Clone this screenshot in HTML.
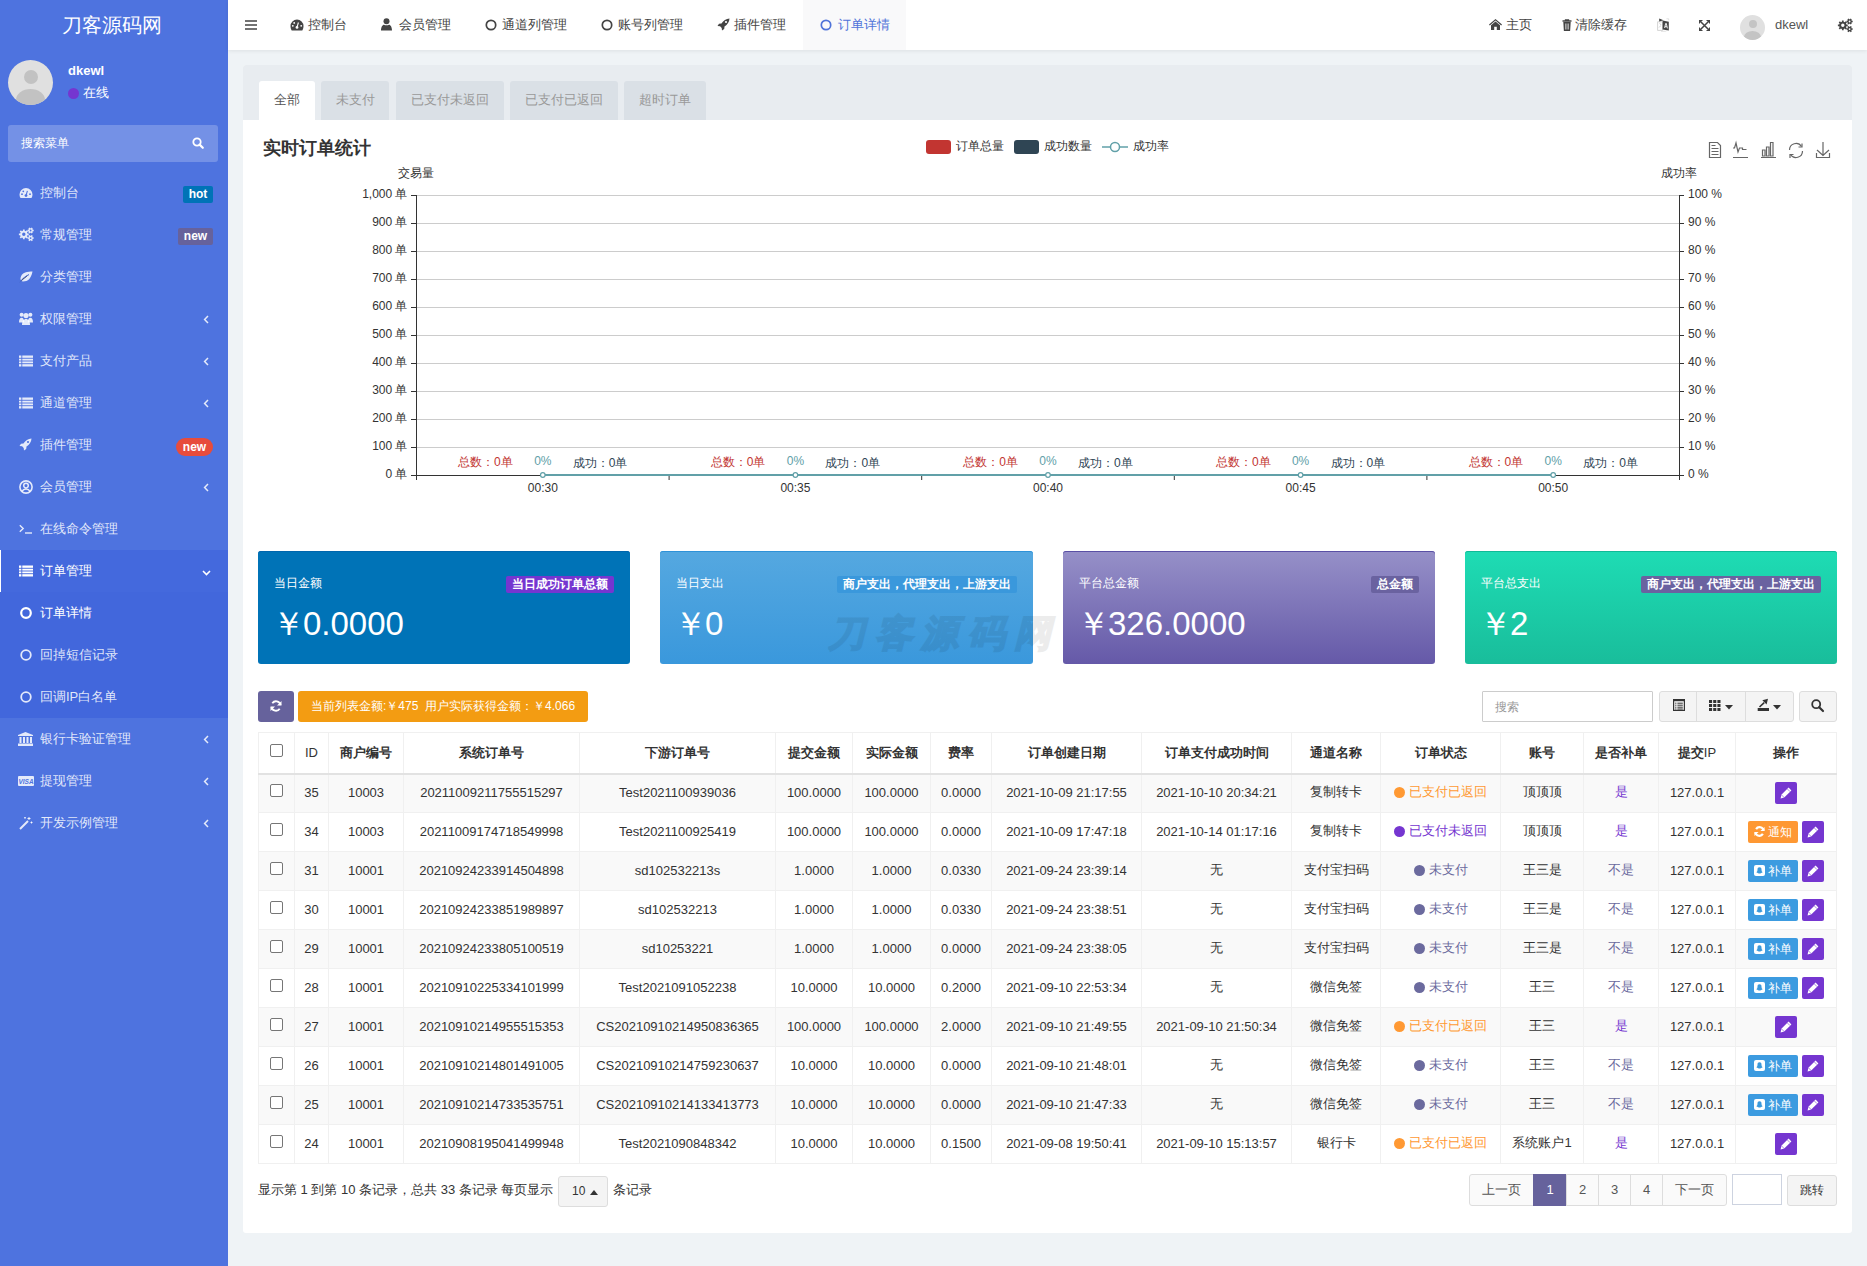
<!DOCTYPE html><html><head><meta charset="utf-8"><style>
*{box-sizing:border-box;margin:0;padding:0}
html,body{width:1867px;height:1266px;overflow:hidden}
body{font-family:"Liberation Sans",sans-serif;font-size:13px;color:#333;background:#eff3f6;position:relative}
.abs{position:absolute}
svg{position:absolute;overflow:visible}
#sidebar{position:absolute;left:0;top:0;width:228px;height:1266px;background:#4e73df;color:#fff}
#header{position:absolute;left:228px;top:0;width:1639px;height:50px;background:#fff;box-shadow:0 1px 4px rgba(0,0,0,.08)}
.nt{position:absolute;top:18px;line-height:14px;color:#444;font-size:13px;white-space:nowrap}
.panel{position:absolute;left:243px;top:65px;width:1609px;height:1168px;background:#fff;border-radius:3px;overflow:hidden}
.tabbar{position:absolute;left:0;top:0;width:100%;height:55px;background:#e8ecf0}
.tab{position:absolute;top:16px;height:39px;line-height:37px;text-align:center;background:#dae0e6;color:#999;border-radius:3px 3px 0 0;font-size:13px}
.tab.on{background:#fff;color:#555}
.mi{position:absolute;left:0;width:228px;height:42px;color:rgba(255,255,255,.85);font-size:13px;white-space:nowrap}
.mi .t{position:absolute;left:40px;top:14px;line-height:14px}
.badge{position:absolute;height:17px;line-height:17px;font-size:12px;font-weight:bold;color:#fff;padding:0 5px;border-radius:3px}
.card{position:absolute;top:551px;height:113px;width:372px;border-radius:3px;color:#fff}
.card .lb{position:absolute;left:16px;top:25px;font-size:12px;line-height:14px}
.card .bd{position:absolute;top:25px;height:17px;line-height:17px;font-size:12px;font-weight:bold;padding:0 6px;border-radius:2px}
.card .num{position:absolute;left:14px;top:53px;font-size:33px;line-height:40px;white-space:nowrap}
table.tb{position:absolute;left:258px;top:732px;width:1578px;border-collapse:collapse;table-layout:fixed;font-size:13px;color:#333}
.tb td,.tb th{border:1px solid #f0f0f0;text-align:center;vertical-align:middle;white-space:nowrap;overflow:hidden;padding:0}
.tb th{height:41px;font-weight:bold;border-bottom:2px solid #e2e2e2}
.tb td{height:39px;padding-bottom:2px}
.tb tr.odd td{background:#f9f9f9}
.cb{display:inline-block;width:13px;height:13px;border:1px solid #767676;border-radius:2px;background:#fff;vertical-align:middle;position:relative;top:-3px}
.dot{display:inline-block;width:11px;height:11px;border-radius:50%;vertical-align:middle;margin-right:4px;position:relative;top:0}
.st1{color:#ff9933}.st1 .dot{background:#ff9933}
.st2{color:#7536d0}.st2 .dot{background:#7536d0}
.st3{color:#6b6a9e}.st3 .dot{background:#6b6a9e}
.yes{color:#7536d0}.no{color:#6b6a9e}
.eb{display:inline-block;width:22px;height:22px;background:#7536d0;border-radius:2px;vertical-align:middle;position:relative;top:1px}
.bb{display:inline-block;height:20px;line-height:20px;padding:0 5px;background:#3c9be0;color:#fff;border-radius:2px;vertical-align:middle;font-size:12px;margin-right:4px;position:relative;top:1px}
.ob{display:inline-block;height:20px;line-height:20px;padding:0 5px;background:#fe9833;color:#fff;border-radius:2px;vertical-align:middle;font-size:12px;margin-right:4px;position:relative;top:1px}
.pg{position:absolute;top:1174px;height:32px;line-height:30px;text-align:center;border:1px solid #ddd;background:#fafafa;color:#555;font-size:13px}
.ax{font-size:12px;fill:#333}
</style></head><body>
<div id="sidebar">
<div class="abs" style="left:-2px;top:14px;width:228px;line-height:22px;text-align:center;font-size:20px;color:#fff">刀客源码网</div>
<div class="abs" style="left:8px;top:60px;width:45px;height:45px;border-radius:50%;background:#e0e0e0;overflow:hidden">
<div class="abs" style="left:16px;top:10px;width:14px;height:14px;border-radius:50%;background:#c2c2c2"></div>
<div class="abs" style="left:8px;top:29px;width:29px;height:22px;border-radius:50%;background:#c2c2c2"></div></div>
<div class="abs" style="left:68px;top:64px;font-size:13px;font-weight:bold;line-height:14px">dkewl</div>
<div class="abs" style="left:68px;top:88px;width:11px;height:11px;border-radius:50%;background:#7536d0"></div>
<div class="abs" style="left:83px;top:86px;font-size:13px;line-height:14px">在线</div>
<div class="abs" style="left:8px;top:125px;width:210px;height:37px;border-radius:3px;background:rgba(255,255,255,.22)">
<div class="abs" style="left:13px;top:11px;font-size:12px;line-height:14px;color:#fff">搜索菜单</div>
<svg style="left:184px;top:11.5px" width="12" height="12" viewBox="0 0 12 12"><circle cx="5" cy="5" r="3.7" fill="none" stroke="#fff" stroke-width="1.8"/><path d="M7.6 7.6L10.8 10.8" stroke="#fff" stroke-width="2.2" stroke-linecap="round"/></svg></div>
<div class="abs" style="left:0;top:550px;width:228px;height:168px;background:#4267dc"></div><div class="abs" style="left:0;top:550px;width:228px;height:42px;background:#4469dd"></div>
<div class="abs" style="left:0;top:550px;width:1px;height:42px;background:#fff"></div>
<svg style="left:19px;top:187px" width="14" height="12" viewBox="0 0 14 12"><path d="M7 1A6.5 6.5 0 0 0 .5 7.5c0 1.3.4 2.6 1 3.5h11c.7-1 1-2.2 1-3.5A6.5 6.5 0 0 0 7 1z" fill="rgba(255,255,255,.85)"/><circle cx="7" cy="8.6" r="1.4" fill="#4e73df"/><path d="M7 8.6L8.4 3.8" stroke="#4e73df" stroke-width="1.1"/><circle cx="3" cy="7.2" r=".9" fill="#4e73df"/><circle cx="4.3" cy="4.3" r=".9" fill="#4e73df"/><circle cx="11" cy="7.2" r=".9" fill="#4e73df"/></svg>
<div class="abs" style="left:40px;top:186px;line-height:14px;font-size:13px;color:rgba(255,255,255,.85);white-space:nowrap">控制台</div>
<div class="badge" style="left:183px;top:186px;width:30px;height:17px;line-height:17px;text-align:center;padding:0;background:#0073b7;border-radius:2px">hot</div>
<svg style="left:18px;top:227px" width="16" height="15" viewBox="0 0 16 15"><path d="M4.38 3.88L4.92 3.71L4.92 2.38L6.68 2.38L6.68 3.71L7.22 3.88L7.72 4.14L8.66 3.20L9.90 4.44L8.96 5.38L9.22 5.88L9.39 6.42L10.72 6.42L10.72 8.18L9.39 8.18L9.22 8.72L8.96 9.22L9.90 10.16L8.66 11.40L7.72 10.46L7.22 10.72L6.68 10.89L6.68 12.22L4.92 12.22L4.92 10.89L4.38 10.72L3.88 10.46L2.94 11.40L1.70 10.16L2.64 9.22L2.38 8.72L2.21 8.18L0.88 8.18L0.88 6.42L2.21 6.42L2.38 5.88L2.64 5.38L1.70 4.44L2.94 3.20L3.88 4.14ZM7.50 7.30A1.7 1.7 0 1 0 4.10 7.30A1.7 1.7 0 1 0 7.50 7.30ZM14.59 2.35L14.78 2.78L15.71 2.75L15.71 4.25L14.78 4.22L14.59 4.65L14.32 5.03L14.80 5.82L13.51 6.57L13.07 5.75L12.60 5.80L12.13 5.75L11.69 6.57L10.40 5.82L10.88 5.03L10.61 4.65L10.42 4.22L9.49 4.25L9.49 2.75L10.42 2.78L10.61 2.35L10.88 1.97L10.40 1.18L11.69 0.43L12.13 1.25L12.60 1.20L13.07 1.25L13.51 0.43L14.80 1.18L14.32 1.97ZM13.50 3.50A0.9 0.9 0 1 0 11.70 3.50A0.9 0.9 0 1 0 13.50 3.50ZM14.59 9.95L14.78 10.38L15.71 10.35L15.71 11.85L14.78 11.82L14.59 12.25L14.32 12.63L14.80 13.42L13.51 14.17L13.07 13.35L12.60 13.40L12.13 13.35L11.69 14.17L10.40 13.42L10.88 12.63L10.61 12.25L10.42 11.82L9.49 11.85L9.49 10.35L10.42 10.38L10.61 9.95L10.88 9.57L10.40 8.78L11.69 8.03L12.13 8.85L12.60 8.80L13.07 8.85L13.51 8.03L14.80 8.78L14.32 9.57ZM13.50 11.10A0.9 0.9 0 1 0 11.70 11.10A0.9 0.9 0 1 0 13.50 11.10Z" fill="rgba(255,255,255,.85)" fill-rule="evenodd"/></svg>
<div class="abs" style="left:40px;top:228px;line-height:14px;font-size:13px;color:rgba(255,255,255,.85);white-space:nowrap">常规管理</div>
<div class="badge" style="left:178px;top:228px;width:35px;height:17px;line-height:17px;text-align:center;padding:0;background:#66629c;border-radius:2px">new</div>
<svg style="left:19px;top:271px" width="14" height="12" viewBox="0 0 14 12"><path d="M13.5 .5C9 .5 2.5 1 1.5 7c-.3 1.8.8 3.5 2.5 3.5 5 0 8-3 9.5-10z" fill="rgba(255,255,255,.85)"/><path d="M.5 11.5C3 8 6 5.5 10 3.5" stroke="#4e73df" stroke-width="1"/></svg>
<div class="abs" style="left:40px;top:270px;line-height:14px;font-size:13px;color:rgba(255,255,255,.85);white-space:nowrap">分类管理</div>
<svg style="left:19px;top:312px" width="14" height="13" viewBox="0 0 14 13"><circle cx="7" cy="3.6" r="2.6" fill="rgba(255,255,255,.85)"/><circle cx="2.6" cy="2.8" r="2" fill="rgba(255,255,255,.85)"/><circle cx="11.4" cy="2.8" r="2" fill="rgba(255,255,255,.85)"/><path d="M3 13c0-3.6 1.6-6 4-6s4 2.4 4 6z" fill="rgba(255,255,255,.85)"/><path d="M0 10.5c0-3 1-4.8 2.6-4.8S5.2 7.5 5.2 10.5zM8.8 10.5c0-3 1-4.8 2.6-4.8S14 7.5 14 10.5z" fill="rgba(255,255,255,.85)"/></svg>
<div class="abs" style="left:40px;top:312px;line-height:14px;font-size:13px;color:rgba(255,255,255,.85);white-space:nowrap">权限管理</div>
<svg style="left:203px;top:315px" width="6" height="9" viewBox="0 0 6 9"><path d="M5 1L1.6 4.5L5 8" fill="none" stroke="rgba(255,255,255,.85)" stroke-width="1.5"/></svg>
<svg style="left:19px;top:355px" width="14" height="12" viewBox="0 0 14 12"><rect x="0" y=".5" width="14" height="11" fill="rgba(255,255,255,.85)"/><path d="M0 3.3H14M0 6H14M0 8.7H14M2.8 0V12" stroke="#4e73df" stroke-width=".9"/></svg>
<div class="abs" style="left:40px;top:354px;line-height:14px;font-size:13px;color:rgba(255,255,255,.85);white-space:nowrap">支付产品</div>
<svg style="left:203px;top:357px" width="6" height="9" viewBox="0 0 6 9"><path d="M5 1L1.6 4.5L5 8" fill="none" stroke="rgba(255,255,255,.85)" stroke-width="1.5"/></svg>
<svg style="left:19px;top:397px" width="14" height="12" viewBox="0 0 14 12"><rect x="0" y=".5" width="14" height="11" fill="rgba(255,255,255,.85)"/><path d="M0 3.3H14M0 6H14M0 8.7H14M2.8 0V12" stroke="#4e73df" stroke-width=".9"/></svg>
<div class="abs" style="left:40px;top:396px;line-height:14px;font-size:13px;color:rgba(255,255,255,.85);white-space:nowrap">通道管理</div>
<svg style="left:203px;top:399px" width="6" height="9" viewBox="0 0 6 9"><path d="M5 1L1.6 4.5L5 8" fill="none" stroke="rgba(255,255,255,.85)" stroke-width="1.5"/></svg>
<svg style="left:19px;top:438px" width="13" height="13" viewBox="0 0 13 13"><path d="M12.5.5C9 .7 6.5 2.5 4.5 5.5L2 5.8.5 8l2.6.3L4.7 10l.3 2.6L7.2 11l.3-2.5c3-2 4.8-4.5 5-8z" fill="rgba(255,255,255,.85)"/><circle cx="9" cy="4" r="1.1" fill="#4e73df"/></svg>
<div class="abs" style="left:40px;top:438px;line-height:14px;font-size:13px;color:rgba(255,255,255,.85);white-space:nowrap">插件管理</div>
<div class="badge" style="left:176px;top:438px;width:37px;height:18px;line-height:18px;text-align:center;padding:0;background:#e74c3c;border-radius:9px">new</div>
<svg style="left:19px;top:480px" width="14" height="14" viewBox="0 0 14 14"><circle cx="7" cy="7" r="6.1" fill="none" stroke="rgba(255,255,255,.85)" stroke-width="1.6"/><circle cx="7" cy="5.6" r="2.3" fill="none" stroke="rgba(255,255,255,.85)" stroke-width="1.5"/><path d="M3 11.3c.8-1.5 2.2-2.4 4-2.4s3.2.9 4 2.4" fill="none" stroke="rgba(255,255,255,.85)" stroke-width="1.5"/></svg>
<div class="abs" style="left:40px;top:480px;line-height:14px;font-size:13px;color:rgba(255,255,255,.85);white-space:nowrap">会员管理</div>
<svg style="left:203px;top:483px" width="6" height="9" viewBox="0 0 6 9"><path d="M5 1L1.6 4.5L5 8" fill="none" stroke="rgba(255,255,255,.85)" stroke-width="1.5"/></svg>
<svg style="left:19px;top:524px" width="14" height="10" viewBox="0 0 14 10"><path d="M.8 1.2L4.2 4.5L.8 7.8" fill="none" stroke="rgba(255,255,255,.85)" stroke-width="1.4"/><path d="M6 9H13" stroke="rgba(255,255,255,.85)" stroke-width="1.4"/></svg>
<div class="abs" style="left:40px;top:522px;line-height:14px;font-size:13px;color:rgba(255,255,255,.85);white-space:nowrap">在线命令管理</div>
<svg style="left:19px;top:565px" width="14" height="12" viewBox="0 0 14 12"><rect x="0" y=".5" width="14" height="11" fill="#fff"/><path d="M0 3.3H14M0 6H14M0 8.7H14M2.8 0V12" stroke="#4267dc" stroke-width=".9"/></svg>
<div class="abs" style="left:40px;top:564px;line-height:14px;font-size:13px;color:#fff;white-space:nowrap">订单管理</div>
<svg style="left:202px;top:570px" width="9" height="6" viewBox="0 0 9 6"><path d="M1 1L4.5 4.5L8 1" fill="none" stroke="#fff" stroke-width="1.6"/></svg>
<svg style="left:20px;top:607px" width="12" height="12" viewBox="0 0 12 12"><circle cx="6" cy="6" r="4.8" fill="none" stroke="#fff" stroke-width="2.2"/></svg>
<div class="abs" style="left:40px;top:606px;line-height:14px;font-size:13px;color:#fff;white-space:nowrap">订单详情</div>
<svg style="left:20px;top:649px" width="12" height="12" viewBox="0 0 12 12"><circle cx="6" cy="6" r="4.8" fill="none" stroke="rgba(255,255,255,.85)" stroke-width="1.8"/></svg>
<div class="abs" style="left:40px;top:648px;line-height:14px;font-size:13px;color:rgba(255,255,255,.85);white-space:nowrap">回掉短信记录</div>
<svg style="left:20px;top:691px" width="12" height="12" viewBox="0 0 12 12"><circle cx="6" cy="6" r="4.8" fill="none" stroke="rgba(255,255,255,.85)" stroke-width="1.8"/></svg>
<div class="abs" style="left:40px;top:690px;line-height:14px;font-size:13px;color:rgba(255,255,255,.85);white-space:nowrap">回调IP白名单</div>
<svg style="left:18px;top:732px" width="15" height="14" viewBox="0 0 15 14"><path d="M7.5 0L15 3V4H0V3z" fill="rgba(255,255,255,.85)"/><rect x="1.5" y="5" width="2" height="6" fill="rgba(255,255,255,.85)"/><rect x="5" y="5" width="2" height="6" fill="rgba(255,255,255,.85)"/><rect x="8.5" y="5" width="2" height="6" fill="rgba(255,255,255,.85)"/><rect x="12" y="5" width="2" height="6" fill="rgba(255,255,255,.85)"/><rect x="0" y="11.5" width="15" height="2.5" fill="rgba(255,255,255,.85)"/></svg>
<div class="abs" style="left:40px;top:732px;line-height:14px;font-size:13px;color:rgba(255,255,255,.85);white-space:nowrap">银行卡验证管理</div>
<svg style="left:203px;top:735px" width="6" height="9" viewBox="0 0 6 9"><path d="M5 1L1.6 4.5L5 8" fill="none" stroke="rgba(255,255,255,.85)" stroke-width="1.5"/></svg>
<svg style="left:18px;top:776px" width="16" height="10" viewBox="0 0 16 10"><rect width="16" height="10" rx="1" fill="rgba(255,255,255,.85)"/><text x="8" y="7.8" font-size="6.5" font-weight="bold" font-style="italic" text-anchor="middle" fill="#4e73df" font-family="Liberation Sans">VISA</text></svg>
<div class="abs" style="left:40px;top:774px;line-height:14px;font-size:13px;color:rgba(255,255,255,.85);white-space:nowrap">提现管理</div>
<svg style="left:203px;top:777px" width="6" height="9" viewBox="0 0 6 9"><path d="M5 1L1.6 4.5L5 8" fill="none" stroke="rgba(255,255,255,.85)" stroke-width="1.5"/></svg>
<svg style="left:19px;top:816px" width="14" height="14" viewBox="0 0 14 14"><path d="M1 13L9 5" stroke="rgba(255,255,255,.85)" stroke-width="2"/><path d="M10 1v3M8.5 2.5h3M12.5 5.5v2M11.5 6.5h2M6 1v1.5M5.2 1.8h1.6" stroke="rgba(255,255,255,.85)" stroke-width="1"/></svg>
<div class="abs" style="left:40px;top:816px;line-height:14px;font-size:13px;color:rgba(255,255,255,.85);white-space:nowrap">开发示例管理</div>
<svg style="left:203px;top:819px" width="6" height="9" viewBox="0 0 6 9"><path d="M5 1L1.6 4.5L5 8" fill="none" stroke="rgba(255,255,255,.85)" stroke-width="1.5"/></svg>
</div>
<div id="header">
<svg style="left:17px;top:20px" width="12" height="10" viewBox="0 0 12 10"><path d="M0 1H12M0 5H12M0 9H12" stroke="#444" stroke-width="1.6"/></svg>
<div class="abs" style="left:575px;top:0;width:103px;height:50px;background:#f9f9fa"></div>
<svg style="left:62px;top:19px" width="14" height="12" viewBox="0 0 14 12"><path d="M7 .5A6.5 6.5 0 0 0 .5 7c0 1.7.5 3.2 1.2 4.5h10.6c.7-1.3 1.2-2.8 1.2-4.5A6.5 6.5 0 0 0 7 .5z" fill="#444"/><circle cx="7" cy="8.4" r="1.4" fill="#fff"/><path d="M7 8.4L8.4 3.5" stroke="#fff" stroke-width="1.1"/><circle cx="2.8" cy="6.8" r=".9" fill="#fff"/><circle cx="4.2" cy="3.9" r=".9" fill="#fff"/><circle cx="11.2" cy="6.8" r=".9" fill="#fff"/></svg>
<div class="nt" style="left:80px;color:#444">控制台</div>
<svg style="left:153px;top:18px" width="11" height="13" viewBox="0 0 11 13"><circle cx="5.5" cy="3.2" r="3" fill="#444"/><path d="M0 12.5c0-3.5 1.5-5.8 3-5.8.7.4 1.5.6 2.5.6s1.8-.2 2.5-.6c1.5 0 3 2.3 3 5.8z" fill="#444"/></svg>
<div class="nt" style="left:171px;color:#444">会员管理</div>
<svg style="left:257px;top:19px" width="12" height="12" viewBox="0 0 12 12"><circle cx="6" cy="6" r="4.7" fill="none" stroke="#444" stroke-width="1.7"/></svg>
<div class="nt" style="left:274px;color:#444">通道列管理</div>
<svg style="left:373px;top:19px" width="12" height="12" viewBox="0 0 12 12"><circle cx="6" cy="6" r="4.7" fill="none" stroke="#444" stroke-width="1.7"/></svg>
<div class="nt" style="left:390px;color:#444">账号列管理</div>
<svg style="left:489px;top:18px" width="13" height="13" viewBox="0 0 13 13"><path d="M12.5.5C9 .7 6.5 2.5 4.5 5.5L2 5.8.5 8l2.6.3L4.7 10l.3 2.6L7.2 11l.3-2.5c3-2 4.8-4.5 5-8z" fill="#444"/><circle cx="9" cy="4" r="1.1" fill="#fff"/></svg>
<div class="nt" style="left:506px;color:#444">插件管理</div>
<svg style="left:592px;top:19px" width="12" height="12" viewBox="0 0 12 12"><circle cx="6" cy="6" r="4.7" fill="none" stroke="#4f73d9" stroke-width="1.7"/></svg>
<div class="nt" style="left:610px;color:#4f73d9">订单详情</div>
<svg style="left:1261px;top:19px" width="13" height="11" viewBox="0 0 13 11"><path d="M6.5 0L13 5.6l-.8.9L6.5 1.6.8 6.5 0 5.6z" fill="#444"/><path d="M2 6.2L6.5 2.4 11 6.2V11H7.8V7.8H5.2V11H2z" fill="#444"/></svg>
<div class="nt" style="left:1278px">主页</div>
<svg style="left:1334px;top:19px" width="10" height="12" viewBox="0 0 10 12"><path d="M.5 2H9.5M3.5 2V.8h3V2" stroke="#444" stroke-width="1.3" fill="none"/><path d="M1.3 3h7.4l-.6 9H1.9z" fill="#444"/><path d="M3.6 4.5v6M5 4.5v6M6.4 4.5v6" stroke="#fff" stroke-width=".6"/></svg>
<div class="nt" style="left:1347px">清除缓存</div>
<svg style="left:1429px;top:18px" width="13" height="14" viewBox="0 0 13 14"><path d="M.6 3.8h5v8.6H.6z" fill="none" stroke="#c8c8c8" stroke-width=".8"/><path d="M2.5 5.5c.8 0 1.6.8 1.2 2M2 9.5l1.5-1.5" stroke="#bbb" stroke-width=".7" fill="none"/><path d="M2.2 .5L6.5 2.2 2.2 3.4z" fill="#444"/><path d="M5.6 2.6L11.8 3.8V12.6L5.6 11.4z" fill="#444"/><path d="M7.6 10l1.1-4.6h.6L10.4 10.4M8 8.7h1.9" stroke="#fff" stroke-width=".9" fill="none"/><path d="M9.5 .8h2.2v1.6M4 13.3h4.5l1.3-.8" stroke="#ccc" stroke-width=".6" fill="none"/></svg>
<svg style="left:1471px;top:20px" width="11" height="11" viewBox="0 0 11 11"><path d="M2 2L9 9M9 2L2 9" stroke="#444" stroke-width="1.5"/><path d="M0 0h4L0 4zM11 0v4L7 0zM0 11V7l4 4zM11 11H7l4-4z" fill="#444"/></svg>
<div class="abs" style="left:1512px;top:15px;width:25px;height:25px;border-radius:50%;background:#e0e0e0;overflow:hidden">
<div class="abs" style="left:9px;top:5px;width:8px;height:8px;border-radius:50%;background:#c4c4c4"></div>
<div class="abs" style="left:4px;top:16px;width:17px;height:12px;border-radius:50%;background:#c4c4c4"></div></div>
<div class="nt" style="left:1547px;color:#555">dkewl</div>
<svg style="left:1609px;top:18px" width="16" height="15" viewBox="0 0 16 15"><path d="M4.38 3.88L4.92 3.71L4.92 2.38L6.68 2.38L6.68 3.71L7.22 3.88L7.72 4.14L8.66 3.20L9.90 4.44L8.96 5.38L9.22 5.88L9.39 6.42L10.72 6.42L10.72 8.18L9.39 8.18L9.22 8.72L8.96 9.22L9.90 10.16L8.66 11.40L7.72 10.46L7.22 10.72L6.68 10.89L6.68 12.22L4.92 12.22L4.92 10.89L4.38 10.72L3.88 10.46L2.94 11.40L1.70 10.16L2.64 9.22L2.38 8.72L2.21 8.18L0.88 8.18L0.88 6.42L2.21 6.42L2.38 5.88L2.64 5.38L1.70 4.44L2.94 3.20L3.88 4.14ZM7.50 7.30A1.7 1.7 0 1 0 4.10 7.30A1.7 1.7 0 1 0 7.50 7.30ZM14.59 2.35L14.78 2.78L15.71 2.75L15.71 4.25L14.78 4.22L14.59 4.65L14.32 5.03L14.80 5.82L13.51 6.57L13.07 5.75L12.60 5.80L12.13 5.75L11.69 6.57L10.40 5.82L10.88 5.03L10.61 4.65L10.42 4.22L9.49 4.25L9.49 2.75L10.42 2.78L10.61 2.35L10.88 1.97L10.40 1.18L11.69 0.43L12.13 1.25L12.60 1.20L13.07 1.25L13.51 0.43L14.80 1.18L14.32 1.97ZM13.50 3.50A0.9 0.9 0 1 0 11.70 3.50A0.9 0.9 0 1 0 13.50 3.50ZM14.59 9.95L14.78 10.38L15.71 10.35L15.71 11.85L14.78 11.82L14.59 12.25L14.32 12.63L14.80 13.42L13.51 14.17L13.07 13.35L12.60 13.40L12.13 13.35L11.69 14.17L10.40 13.42L10.88 12.63L10.61 12.25L10.42 11.82L9.49 11.85L9.49 10.35L10.42 10.38L10.61 9.95L10.88 9.57L10.40 8.78L11.69 8.03L12.13 8.85L12.60 8.80L13.07 8.85L13.51 8.03L14.80 8.78L14.32 9.57ZM13.50 11.10A0.9 0.9 0 1 0 11.70 11.10A0.9 0.9 0 1 0 13.50 11.10Z" fill="#444" fill-rule="evenodd"/></svg>
</div>
<div class="panel"><div class="tabbar"></div>
<div class="tab on" style="left:16px;width:56px">全部</div>
<div class="tab" style="left:78px;width:68px">未支付</div>
<div class="tab" style="left:153px;width:108px">已支付未返回</div>
<div class="tab" style="left:267px;width:108px">已支付已返回</div>
<div class="tab" style="left:381px;width:82px">超时订单</div>
</div>
<div class="abs" style="left:263px;top:138px;font-size:18px;font-weight:bold;line-height:20px;color:#333">实时订单统计</div>
<svg style="left:0;top:0" width="1867" height="1266" viewBox="0 0 1867 1266"><line x1="411" y1="475.5" x2="416.5" y2="475.5" stroke="#333" stroke-width="1"/><line x1="1679.5" y1="475.5" x2="1684" y2="475.5" stroke="#333" stroke-width="1"/><text class="ax" x="407.5" y="478.0" text-anchor="end">0 单</text><text class="ax" x="1688" y="478.0">0 %</text><line x1="416.5" y1="447.5" x2="1679.5" y2="447.5" stroke="#ccc" stroke-width="1"/><line x1="411" y1="447.5" x2="416.5" y2="447.5" stroke="#333" stroke-width="1"/><line x1="1679.5" y1="447.5" x2="1684" y2="447.5" stroke="#333" stroke-width="1"/><text class="ax" x="407.5" y="450.0" text-anchor="end">100 单</text><text class="ax" x="1688" y="450.0">10 %</text><line x1="416.5" y1="419.5" x2="1679.5" y2="419.5" stroke="#ccc" stroke-width="1"/><line x1="411" y1="419.5" x2="416.5" y2="419.5" stroke="#333" stroke-width="1"/><line x1="1679.5" y1="419.5" x2="1684" y2="419.5" stroke="#333" stroke-width="1"/><text class="ax" x="407.5" y="422.0" text-anchor="end">200 单</text><text class="ax" x="1688" y="422.0">20 %</text><line x1="416.5" y1="391.5" x2="1679.5" y2="391.5" stroke="#ccc" stroke-width="1"/><line x1="411" y1="391.5" x2="416.5" y2="391.5" stroke="#333" stroke-width="1"/><line x1="1679.5" y1="391.5" x2="1684" y2="391.5" stroke="#333" stroke-width="1"/><text class="ax" x="407.5" y="394.0" text-anchor="end">300 单</text><text class="ax" x="1688" y="394.0">30 %</text><line x1="416.5" y1="363.5" x2="1679.5" y2="363.5" stroke="#ccc" stroke-width="1"/><line x1="411" y1="363.5" x2="416.5" y2="363.5" stroke="#333" stroke-width="1"/><line x1="1679.5" y1="363.5" x2="1684" y2="363.5" stroke="#333" stroke-width="1"/><text class="ax" x="407.5" y="366.0" text-anchor="end">400 单</text><text class="ax" x="1688" y="366.0">40 %</text><line x1="416.5" y1="335.5" x2="1679.5" y2="335.5" stroke="#ccc" stroke-width="1"/><line x1="411" y1="335.5" x2="416.5" y2="335.5" stroke="#333" stroke-width="1"/><line x1="1679.5" y1="335.5" x2="1684" y2="335.5" stroke="#333" stroke-width="1"/><text class="ax" x="407.5" y="338.0" text-anchor="end">500 单</text><text class="ax" x="1688" y="338.0">50 %</text><line x1="416.5" y1="307.5" x2="1679.5" y2="307.5" stroke="#ccc" stroke-width="1"/><line x1="411" y1="307.5" x2="416.5" y2="307.5" stroke="#333" stroke-width="1"/><line x1="1679.5" y1="307.5" x2="1684" y2="307.5" stroke="#333" stroke-width="1"/><text class="ax" x="407.5" y="310.0" text-anchor="end">600 单</text><text class="ax" x="1688" y="310.0">60 %</text><line x1="416.5" y1="279.5" x2="1679.5" y2="279.5" stroke="#ccc" stroke-width="1"/><line x1="411" y1="279.5" x2="416.5" y2="279.5" stroke="#333" stroke-width="1"/><line x1="1679.5" y1="279.5" x2="1684" y2="279.5" stroke="#333" stroke-width="1"/><text class="ax" x="407.5" y="282.0" text-anchor="end">700 单</text><text class="ax" x="1688" y="282.0">70 %</text><line x1="416.5" y1="251.5" x2="1679.5" y2="251.5" stroke="#ccc" stroke-width="1"/><line x1="411" y1="251.5" x2="416.5" y2="251.5" stroke="#333" stroke-width="1"/><line x1="1679.5" y1="251.5" x2="1684" y2="251.5" stroke="#333" stroke-width="1"/><text class="ax" x="407.5" y="254.0" text-anchor="end">800 单</text><text class="ax" x="1688" y="254.0">80 %</text><line x1="416.5" y1="223.5" x2="1679.5" y2="223.5" stroke="#ccc" stroke-width="1"/><line x1="411" y1="223.5" x2="416.5" y2="223.5" stroke="#333" stroke-width="1"/><line x1="1679.5" y1="223.5" x2="1684" y2="223.5" stroke="#333" stroke-width="1"/><text class="ax" x="407.5" y="226.0" text-anchor="end">900 单</text><text class="ax" x="1688" y="226.0">90 %</text><line x1="416.5" y1="195.5" x2="1679.5" y2="195.5" stroke="#ccc" stroke-width="1"/><line x1="411" y1="195.5" x2="416.5" y2="195.5" stroke="#333" stroke-width="1"/><line x1="1679.5" y1="195.5" x2="1684" y2="195.5" stroke="#333" stroke-width="1"/><text class="ax" x="407.5" y="198.0" text-anchor="end">1,000 单</text><text class="ax" x="1688" y="198.0">100 %</text><line x1="416.5" y1="195" x2="416.5" y2="476" stroke="#333" stroke-width="1"/><line x1="1679.5" y1="195" x2="1679.5" y2="476" stroke="#333" stroke-width="1"/><line x1="416.5" y1="475.5" x2="1679.5" y2="475.5" stroke="#333" stroke-width="1"/><line x1="416.5" y1="475" x2="416.5" y2="480" stroke="#333" stroke-width="1"/><line x1="669.1" y1="475" x2="669.1" y2="480" stroke="#333" stroke-width="1"/><line x1="921.7" y1="475" x2="921.7" y2="480" stroke="#333" stroke-width="1"/><line x1="1174.3" y1="475" x2="1174.3" y2="480" stroke="#333" stroke-width="1"/><line x1="1426.9" y1="475" x2="1426.9" y2="480" stroke="#333" stroke-width="1"/><line x1="1679.5" y1="475" x2="1679.5" y2="480" stroke="#333" stroke-width="1"/><text class="ax" x="542.8" y="492" text-anchor="middle">00:30</text><text x="512.8" y="466" text-anchor="end" font-size="12" fill="#c23531">总数：0单</text><text x="542.8" y="465" text-anchor="middle" font-size="12" fill="#61a0a8">0%</text><text x="572.8" y="467" font-size="12" fill="#2f4554">成功：0单</text><text class="ax" x="795.4" y="492" text-anchor="middle">00:35</text><text x="765.4" y="466" text-anchor="end" font-size="12" fill="#c23531">总数：0单</text><text x="795.4" y="465" text-anchor="middle" font-size="12" fill="#61a0a8">0%</text><text x="825.4" y="467" font-size="12" fill="#2f4554">成功：0单</text><text class="ax" x="1048.0" y="492" text-anchor="middle">00:40</text><text x="1018.0" y="466" text-anchor="end" font-size="12" fill="#c23531">总数：0单</text><text x="1048.0" y="465" text-anchor="middle" font-size="12" fill="#61a0a8">0%</text><text x="1078.0" y="467" font-size="12" fill="#2f4554">成功：0单</text><text class="ax" x="1300.6" y="492" text-anchor="middle">00:45</text><text x="1270.6" y="466" text-anchor="end" font-size="12" fill="#c23531">总数：0单</text><text x="1300.6" y="465" text-anchor="middle" font-size="12" fill="#61a0a8">0%</text><text x="1330.6" y="467" font-size="12" fill="#2f4554">成功：0单</text><text class="ax" x="1553.2" y="492" text-anchor="middle">00:50</text><text x="1523.2" y="466" text-anchor="end" font-size="12" fill="#c23531">总数：0单</text><text x="1553.2" y="465" text-anchor="middle" font-size="12" fill="#61a0a8">0%</text><text x="1583.2" y="467" font-size="12" fill="#2f4554">成功：0单</text><line x1="542.8" y1="475" x2="1553.2" y2="475" stroke="#61a0a8" stroke-width="2"/><circle cx="542.8" cy="475" r="2.3" fill="#fff" stroke="#61a0a8" stroke-width="1.2"/><circle cx="795.4" cy="475" r="2.3" fill="#fff" stroke="#61a0a8" stroke-width="1.2"/><circle cx="1048.0" cy="475" r="2.3" fill="#fff" stroke="#61a0a8" stroke-width="1.2"/><circle cx="1300.6" cy="475" r="2.3" fill="#fff" stroke="#61a0a8" stroke-width="1.2"/><circle cx="1553.2" cy="475" r="2.3" fill="#fff" stroke="#61a0a8" stroke-width="1.2"/><text class="ax" x="416" y="177" text-anchor="middle">交易量</text><text class="ax" x="1679" y="177" text-anchor="middle">成功率</text><rect x="926" y="140" width="25" height="14" rx="3" fill="#c23531"/><text x="956" y="149.5" font-size="12" fill="#333">订单总量</text><rect x="1014" y="140" width="25" height="14" rx="3" fill="#2f4554"/><text x="1044" y="149.5" font-size="12" fill="#333">成功数量</text><line x1="1102" y1="147" x2="1128" y2="147" stroke="#61a0a8" stroke-width="1.5"/><circle cx="1115" cy="147" r="4.5" fill="#fff" stroke="#61a0a8" stroke-width="1.5"/><text x="1133" y="149.5" font-size="12" fill="#333">成功率</text><g fill="none" stroke="#666" stroke-width="1.2"><path d="M1709.5 142.5h8l3 3v12h-11z"/><path d="M1711.5 148.5h7M1711.5 151.5h7M1711.5 154.5h7M1711.5 145.5h4"/><path d="M1733 148h1.5l1.5-5 2 9 1.5-4h1.5 1.5v1.5h4M1733 157.5h15"/><path d="M1762.5 150v6h2.5v-6zM1766.5 147v9h2.5v-9zM1770.5 142.5v13.5h2.5v-13.5zM1761 157.5h15"/><path d="M1789.5 150a6.5 6.5 0 0 1 12-3.5M1802.5 151a6.5 6.5 0 0 1-12 3.5"/><path d="M1802 143.5v3.5h-3.5M1790 158v-3.5h3.5"/><path d="M1823 142v13M1817 150l6 5.5 6-5.5M1816.5 153v4.5h13v-4.5"/></g></svg>
<div class="card" style="left:258px;box-shadow:inset 0 1px 0 #0066ad;background:#0073b7"><div class="lb">当日金额</div><div class="bd" style="right:16px;background:#7536d0">当日成功订单总额</div><div class="num"><span style="margin-right:-2px">￥</span>0.0000</div></div>
<div class="card" style="left:660px;width:373px;box-shadow:inset 0 1px 0 #2e92d8;background:linear-gradient(#55a8e0,#3a98dc)"><div class="lb">当日支出</div><div class="bd" style="right:16px;background:#3a98dc">商户支出，代理支出，上游支出</div><div class="num"><span style="margin-right:-2px">￥</span>0</div></div>
<div class="card" style="left:1063px;box-shadow:inset 0 1px 0 #5a50a5;background:linear-gradient(#9690c8,#6559a8)"><div class="lb">平台总金额</div><div class="bd" style="right:16px;background:#6a62a0">总金额</div><div class="num"><span style="margin-right:-2px">￥</span>326.0000</div></div>
<div class="card" style="left:1465px;box-shadow:inset 0 1px 0 #0fba97;background:linear-gradient(#1edcb4,#19bd9b)"><div class="lb">平台总支出</div><div class="bd" style="right:16px;background:#6a62a0">商户支出，代理支出，上游支出</div><div class="num"><span style="margin-right:-2px">￥</span>2</div></div>
<div class="abs" style="left:828px;top:611px;font-size:37px;font-weight:bold;font-style:italic;color:#000;opacity:.07;line-height:46px;letter-spacing:9.5px;-webkit-text-stroke:1.8px #000;white-space:nowrap">刀客源码网</div>
<div class="abs" style="left:258px;top:691px;width:36px;height:31px;background:#66629c;border-radius:3px"></div>
<svg style="left:270px;top:700px" width="12" height="12" viewBox="0 0 12 12"><path d="M10.5 5A4.5 4.5 0 0 0 2.3 3.3M1.5 7a4.5 4.5 0 0 0 8.2 1.7" fill="none" stroke="#fff" stroke-width="1.8"/><path d="M11.5 1v4.5H7zM.5 11V6.5H5z" fill="#fff"/></svg>
<div class="abs" style="left:298px;top:691px;width:290px;height:31px;background:#f39c12;border-radius:3px;color:#fff;font-size:12px;line-height:31px;padding-left:13px;white-space:nowrap">当前列表金额:￥475&nbsp; 用户实际获得金额：￥4.066</div>
<div class="abs" style="left:1482px;top:691px;width:171px;height:31px;border:1px solid #ccc;background:#fff;border-radius:1px"><div class="abs" style="left:12px;top:8px;font-size:12px;color:#999;line-height:14px">搜索</div></div>
<div class="abs" style="left:1659px;top:691px;width:135px;height:31px;border:1px solid #ddd;background:#f4f4f4;border-radius:3px"></div>
<div class="abs" style="left:1696px;top:691px;width:1px;height:31px;background:#ddd"></div><div class="abs" style="left:1745px;top:691px;width:1px;height:31px;background:#ddd"></div>
<div class="abs" style="left:1799px;top:691px;width:38px;height:31px;border:1px solid #ddd;background:#f4f4f4;border-radius:3px"></div>
<svg style="left:1673px;top:699px" width="12" height="12" viewBox="0 0 12 12"><rect x=".6" y=".6" width="10.8" height="10.8" fill="none" stroke="#333" stroke-width="1.2"/><rect x="0" y="0" width="12" height="2.2" fill="#333"/><path d="M2.2 4.2h1.2M2.2 6.2h1.2M2.2 8.2h1.2M4.4 4.2h5.4M4.4 6.2h5.4M4.4 8.2h5.4M2.2 10h1.2M4.4 10h5.4" stroke="#333" stroke-width="1"/></svg>
<svg style="left:1709px;top:700px" width="25" height="11" viewBox="0 0 25 11"><g fill="#333"><rect x="0" y="0" width="3.1" height="3"/><rect x="4.2" y="0" width="3.1" height="3"/><rect x="8.4" y="0" width="3.1" height="3"/><rect x="0" y="4" width="3.1" height="3"/><rect x="4.2" y="4" width="3.1" height="3"/><rect x="8.4" y="4" width="3.1" height="3"/><rect x="0" y="8" width="3.1" height="3"/><rect x="4.2" y="8" width="3.1" height="3"/><rect x="8.4" y="8" width="3.1" height="3"/><path d="M16 5h8l-4 4.5z"/></g></svg>
<svg style="left:1757px;top:698px" width="25" height="14" viewBox="0 0 25 14"><g fill="#333"><rect x=".7" y="10" width="11.3" height="3"/><path d="M2.5 9L7.2 4.6" stroke="#333" stroke-width="1.6"/><path d="M5.3 2.2L11 .8 9.6 6.6z"/><path d="M16 7h8l-4 4.5z"/></g></svg>
<svg style="left:1811px;top:699px" width="13" height="13" viewBox="0 0 13 13"><circle cx="5.2" cy="5.2" r="4" fill="none" stroke="#333" stroke-width="1.8"/><path d="M8.2 8.2L12 12" stroke="#333" stroke-width="2.2" stroke-linecap="round"/></svg>
<table class="tb"><colgroup><col style="width:36px"><col style="width:34px"><col style="width:75px"><col style="width:176px"><col style="width:196px"><col style="width:77px"><col style="width:78px"><col style="width:61px"><col style="width:150px"><col style="width:150px"><col style="width:89px"><col style="width:120px"><col style="width:83px"><col style="width:75px"><col style="width:77px"><col style="width:101px"></colgroup><tr><th><span class="cb"></span></th><th><span style="font-weight:normal">ID</span></th><th>商户编号</th><th>系统订单号</th><th>下游订单号</th><th>提交金额</th><th>实际金额</th><th>费率</th><th>订单创建日期</th><th>订单支付成功时间</th><th>通道名称</th><th>订单状态</th><th>账号</th><th>是否补单</th><th>提交<span style="font-weight:normal">IP</span></th><th>操作</th></tr><tr class="odd"><td><span class="cb"></span></td><td>35</td><td>10003</td><td>20211009211755515297</td><td>Test2021100939036</td><td>100.0000</td><td>100.0000</td><td>0.0000</td><td>2021-10-09 21:17:55</td><td>2021-10-10 20:34:21</td><td>复制转卡</td><td><span class="st1"><span class="dot"></span>已支付已返回</span></td><td>顶顶顶</td><td><span class="yes">是</span></td><td>127.0.0.1</td><td><span class="eb"><svg style="left:5px;top:5px" width="12" height="12" viewBox="0 0 12 12"><path d="M8.6 .6L11.4 3.4 4.2 10.6 .6 11.4 1.4 7.8z" fill="#fff"/><path d="M7.3 1.9L10.1 4.7M1.4 7.8L4.2 10.6" stroke="#7536d0" stroke-width=".6"/></svg></span></td></tr><tr class=""><td><span class="cb"></span></td><td>34</td><td>10003</td><td>20211009174718549998</td><td>Test2021100925419</td><td>100.0000</td><td>100.0000</td><td>0.0000</td><td>2021-10-09 17:47:18</td><td>2021-10-14 01:17:16</td><td>复制转卡</td><td><span class="st2"><span class="dot"></span>已支付未返回</span></td><td>顶顶顶</td><td><span class="yes">是</span></td><td>127.0.0.1</td><td><span class="ob" style="width:50px;height:22px;line-height:22px;margin-right:4px;padding:0 0 0 6px;text-align:left"><svg style="position:relative;display:inline-block;vertical-align:-1px;margin-right:3px" width="11" height="11" viewBox="0 0 12 12"><path d="M10.5 5A4.5 4.5 0 0 0 2.3 3.3M1.5 7a4.5 4.5 0 0 0 8.2 1.7" fill="none" stroke="#fff" stroke-width="2.4"/><path d="M11.5 1v4.5H7zM.5 11V6.5H5z" fill="#fff"/></svg>通知</span><span class="eb"><svg style="left:5px;top:5px" width="12" height="12" viewBox="0 0 12 12"><path d="M8.6 .6L11.4 3.4 4.2 10.6 .6 11.4 1.4 7.8z" fill="#fff"/><path d="M7.3 1.9L10.1 4.7M1.4 7.8L4.2 10.6" stroke="#7536d0" stroke-width=".6"/></svg></span></td></tr><tr class="odd"><td><span class="cb"></span></td><td>31</td><td>10001</td><td>20210924233914504898</td><td>sd102532213s</td><td>1.0000</td><td>1.0000</td><td>0.0330</td><td>2021-09-24 23:39:14</td><td>无</td><td>支付宝扫码</td><td><span class="st3"><span class="dot"></span>未支付</span></td><td>王三是</td><td><span class="no">不是</span></td><td>127.0.0.1</td><td><span class="bb" style="width:50px;height:22px;line-height:22px;margin-right:4px;padding:0 0 0 6px;text-align:left"><svg style="position:relative;display:inline-block;vertical-align:-1px;margin-right:3px" width="11" height="11" viewBox="0 0 11 11"><rect width="11" height="11" rx="2" fill="#fff"/><path d="M5.5 2.3C4.2 2.3 3.5 3.2 3.5 4.4v1.3l-1 .4.9.6-1.2.9c.8.3 1.5.2 2 .6.4.3.8.4 1.3.4s.9-.1 1.3-.4c.5-.4 1.2-.3 2-.6l-1.2-.9.9-.6-1-.4V4.4c0-1.2-.7-2.1-2-2.1z" fill="#3a99db"/></svg>补单</span><span class="eb"><svg style="left:5px;top:5px" width="12" height="12" viewBox="0 0 12 12"><path d="M8.6 .6L11.4 3.4 4.2 10.6 .6 11.4 1.4 7.8z" fill="#fff"/><path d="M7.3 1.9L10.1 4.7M1.4 7.8L4.2 10.6" stroke="#7536d0" stroke-width=".6"/></svg></span></td></tr><tr class=""><td><span class="cb"></span></td><td>30</td><td>10001</td><td>20210924233851989897</td><td>sd102532213</td><td>1.0000</td><td>1.0000</td><td>0.0330</td><td>2021-09-24 23:38:51</td><td>无</td><td>支付宝扫码</td><td><span class="st3"><span class="dot"></span>未支付</span></td><td>王三是</td><td><span class="no">不是</span></td><td>127.0.0.1</td><td><span class="bb" style="width:50px;height:22px;line-height:22px;margin-right:4px;padding:0 0 0 6px;text-align:left"><svg style="position:relative;display:inline-block;vertical-align:-1px;margin-right:3px" width="11" height="11" viewBox="0 0 11 11"><rect width="11" height="11" rx="2" fill="#fff"/><path d="M5.5 2.3C4.2 2.3 3.5 3.2 3.5 4.4v1.3l-1 .4.9.6-1.2.9c.8.3 1.5.2 2 .6.4.3.8.4 1.3.4s.9-.1 1.3-.4c.5-.4 1.2-.3 2-.6l-1.2-.9.9-.6-1-.4V4.4c0-1.2-.7-2.1-2-2.1z" fill="#3a99db"/></svg>补单</span><span class="eb"><svg style="left:5px;top:5px" width="12" height="12" viewBox="0 0 12 12"><path d="M8.6 .6L11.4 3.4 4.2 10.6 .6 11.4 1.4 7.8z" fill="#fff"/><path d="M7.3 1.9L10.1 4.7M1.4 7.8L4.2 10.6" stroke="#7536d0" stroke-width=".6"/></svg></span></td></tr><tr class="odd"><td><span class="cb"></span></td><td>29</td><td>10001</td><td>20210924233805100519</td><td>sd10253221</td><td>1.0000</td><td>1.0000</td><td>0.0000</td><td>2021-09-24 23:38:05</td><td>无</td><td>支付宝扫码</td><td><span class="st3"><span class="dot"></span>未支付</span></td><td>王三是</td><td><span class="no">不是</span></td><td>127.0.0.1</td><td><span class="bb" style="width:50px;height:22px;line-height:22px;margin-right:4px;padding:0 0 0 6px;text-align:left"><svg style="position:relative;display:inline-block;vertical-align:-1px;margin-right:3px" width="11" height="11" viewBox="0 0 11 11"><rect width="11" height="11" rx="2" fill="#fff"/><path d="M5.5 2.3C4.2 2.3 3.5 3.2 3.5 4.4v1.3l-1 .4.9.6-1.2.9c.8.3 1.5.2 2 .6.4.3.8.4 1.3.4s.9-.1 1.3-.4c.5-.4 1.2-.3 2-.6l-1.2-.9.9-.6-1-.4V4.4c0-1.2-.7-2.1-2-2.1z" fill="#3a99db"/></svg>补单</span><span class="eb"><svg style="left:5px;top:5px" width="12" height="12" viewBox="0 0 12 12"><path d="M8.6 .6L11.4 3.4 4.2 10.6 .6 11.4 1.4 7.8z" fill="#fff"/><path d="M7.3 1.9L10.1 4.7M1.4 7.8L4.2 10.6" stroke="#7536d0" stroke-width=".6"/></svg></span></td></tr><tr class=""><td><span class="cb"></span></td><td>28</td><td>10001</td><td>20210910225334101999</td><td>Test2021091052238</td><td>10.0000</td><td>10.0000</td><td>0.2000</td><td>2021-09-10 22:53:34</td><td>无</td><td>微信免签</td><td><span class="st3"><span class="dot"></span>未支付</span></td><td>王三</td><td><span class="no">不是</span></td><td>127.0.0.1</td><td><span class="bb" style="width:50px;height:22px;line-height:22px;margin-right:4px;padding:0 0 0 6px;text-align:left"><svg style="position:relative;display:inline-block;vertical-align:-1px;margin-right:3px" width="11" height="11" viewBox="0 0 11 11"><rect width="11" height="11" rx="2" fill="#fff"/><path d="M5.5 2.3C4.2 2.3 3.5 3.2 3.5 4.4v1.3l-1 .4.9.6-1.2.9c.8.3 1.5.2 2 .6.4.3.8.4 1.3.4s.9-.1 1.3-.4c.5-.4 1.2-.3 2-.6l-1.2-.9.9-.6-1-.4V4.4c0-1.2-.7-2.1-2-2.1z" fill="#3a99db"/></svg>补单</span><span class="eb"><svg style="left:5px;top:5px" width="12" height="12" viewBox="0 0 12 12"><path d="M8.6 .6L11.4 3.4 4.2 10.6 .6 11.4 1.4 7.8z" fill="#fff"/><path d="M7.3 1.9L10.1 4.7M1.4 7.8L4.2 10.6" stroke="#7536d0" stroke-width=".6"/></svg></span></td></tr><tr class="odd"><td><span class="cb"></span></td><td>27</td><td>10001</td><td>20210910214955515353</td><td>CS20210910214950836365</td><td>100.0000</td><td>100.0000</td><td>2.0000</td><td>2021-09-10 21:49:55</td><td>2021-09-10 21:50:34</td><td>微信免签</td><td><span class="st1"><span class="dot"></span>已支付已返回</span></td><td>王三</td><td><span class="yes">是</span></td><td>127.0.0.1</td><td><span class="eb"><svg style="left:5px;top:5px" width="12" height="12" viewBox="0 0 12 12"><path d="M8.6 .6L11.4 3.4 4.2 10.6 .6 11.4 1.4 7.8z" fill="#fff"/><path d="M7.3 1.9L10.1 4.7M1.4 7.8L4.2 10.6" stroke="#7536d0" stroke-width=".6"/></svg></span></td></tr><tr class=""><td><span class="cb"></span></td><td>26</td><td>10001</td><td>20210910214801491005</td><td>CS20210910214759230637</td><td>10.0000</td><td>10.0000</td><td>0.0000</td><td>2021-09-10 21:48:01</td><td>无</td><td>微信免签</td><td><span class="st3"><span class="dot"></span>未支付</span></td><td>王三</td><td><span class="no">不是</span></td><td>127.0.0.1</td><td><span class="bb" style="width:50px;height:22px;line-height:22px;margin-right:4px;padding:0 0 0 6px;text-align:left"><svg style="position:relative;display:inline-block;vertical-align:-1px;margin-right:3px" width="11" height="11" viewBox="0 0 11 11"><rect width="11" height="11" rx="2" fill="#fff"/><path d="M5.5 2.3C4.2 2.3 3.5 3.2 3.5 4.4v1.3l-1 .4.9.6-1.2.9c.8.3 1.5.2 2 .6.4.3.8.4 1.3.4s.9-.1 1.3-.4c.5-.4 1.2-.3 2-.6l-1.2-.9.9-.6-1-.4V4.4c0-1.2-.7-2.1-2-2.1z" fill="#3a99db"/></svg>补单</span><span class="eb"><svg style="left:5px;top:5px" width="12" height="12" viewBox="0 0 12 12"><path d="M8.6 .6L11.4 3.4 4.2 10.6 .6 11.4 1.4 7.8z" fill="#fff"/><path d="M7.3 1.9L10.1 4.7M1.4 7.8L4.2 10.6" stroke="#7536d0" stroke-width=".6"/></svg></span></td></tr><tr class="odd"><td><span class="cb"></span></td><td>25</td><td>10001</td><td>20210910214733535751</td><td>CS20210910214133413773</td><td>10.0000</td><td>10.0000</td><td>0.0000</td><td>2021-09-10 21:47:33</td><td>无</td><td>微信免签</td><td><span class="st3"><span class="dot"></span>未支付</span></td><td>王三</td><td><span class="no">不是</span></td><td>127.0.0.1</td><td><span class="bb" style="width:50px;height:22px;line-height:22px;margin-right:4px;padding:0 0 0 6px;text-align:left"><svg style="position:relative;display:inline-block;vertical-align:-1px;margin-right:3px" width="11" height="11" viewBox="0 0 11 11"><rect width="11" height="11" rx="2" fill="#fff"/><path d="M5.5 2.3C4.2 2.3 3.5 3.2 3.5 4.4v1.3l-1 .4.9.6-1.2.9c.8.3 1.5.2 2 .6.4.3.8.4 1.3.4s.9-.1 1.3-.4c.5-.4 1.2-.3 2-.6l-1.2-.9.9-.6-1-.4V4.4c0-1.2-.7-2.1-2-2.1z" fill="#3a99db"/></svg>补单</span><span class="eb"><svg style="left:5px;top:5px" width="12" height="12" viewBox="0 0 12 12"><path d="M8.6 .6L11.4 3.4 4.2 10.6 .6 11.4 1.4 7.8z" fill="#fff"/><path d="M7.3 1.9L10.1 4.7M1.4 7.8L4.2 10.6" stroke="#7536d0" stroke-width=".6"/></svg></span></td></tr><tr class=""><td><span class="cb"></span></td><td>24</td><td>10001</td><td>20210908195041499948</td><td>Test2021090848342</td><td>10.0000</td><td>10.0000</td><td>0.1500</td><td>2021-09-08 19:50:41</td><td>2021-09-10 15:13:57</td><td>银行卡</td><td><span class="st1"><span class="dot"></span>已支付已返回</span></td><td>系统账户1</td><td><span class="yes">是</span></td><td>127.0.0.1</td><td><span class="eb"><svg style="left:5px;top:5px" width="12" height="12" viewBox="0 0 12 12"><path d="M8.6 .6L11.4 3.4 4.2 10.6 .6 11.4 1.4 7.8z" fill="#fff"/><path d="M7.3 1.9L10.1 4.7M1.4 7.8L4.2 10.6" stroke="#7536d0" stroke-width=".6"/></svg></span></td></tr></table>
<div class="abs" style="left:258px;top:1183px;font-size:13px;line-height:14px;color:#333;white-space:nowrap">显示第 1 到第 10 条记录，总共 33 条记录 每页显示</div>
<div class="abs" style="left:558px;top:1176px;width:50px;height:31px;border:1px solid #ddd;background:#f4f4f4;border-radius:3px;font-size:12px;line-height:29px;padding-left:13px;color:#333">10<svg style="left:31px;top:13px" width="8" height="5" viewBox="0 0 8 5"><path d="M0 5L4 0 8 5z" fill="#333"/></svg></div>
<div class="abs" style="left:613px;top:1183px;font-size:13px;line-height:14px;color:#333">条记录</div>
<div class="pg" style="left:1469px;width:65px;border-radius:3px 0 0 3px;">上一页</div>
<div class="pg" style="left:1533px;width:34px;background:#66629c;border-color:#66629c;color:#fff">1</div>
<div class="pg" style="left:1566px;width:33px;">2</div>
<div class="pg" style="left:1598px;width:33px;">3</div>
<div class="pg" style="left:1630px;width:33px;">4</div>
<div class="pg" style="left:1662px;width:65px;border-radius:0 3px 3px 0;">下一页</div>
<div class="abs" style="left:1732px;top:1174px;width:50px;height:31px;border:1px solid #cdd3e0;background:#fff"></div>
<div class="abs" style="left:1787px;top:1175px;width:50px;height:31px;border:1px solid #ddd;background:#f4f4f4;border-radius:3px;text-align:center;line-height:29px;font-size:12px;color:#333">跳转</div>
</body></html>
